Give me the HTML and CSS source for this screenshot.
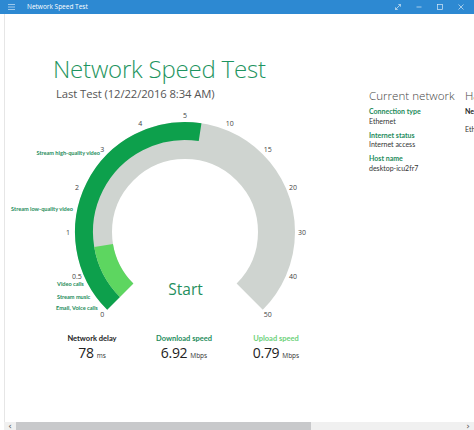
FILE: index.html
```html
<!DOCTYPE html>
<html>
<head>
<meta charset="utf-8">
<link rel="stylesheet" href="styles.css">
</head>
<body>
<div class="titlebar">
  <svg class="hamb" width="7" height="6" viewBox="0 0 7 6"><path d="M0 0.5H7M0 3H7M0 5.5H7" stroke="#b9d9f2" stroke-width="0.8"/></svg>
  <span class="apptitle">Network Speed Test</span>
  <div class="controls">
    <svg class="ctl" width="6" height="6" viewBox="0 0 6 6"><path d="M0.5 5.5L5.5 0.5M3.3 0.5H5.5V2.7M0.5 3.3V5.5H2.7" stroke="#d7e9f7" stroke-width="0.7" fill="none"/></svg>
    <svg class="ctl" width="6" height="6" viewBox="0 0 6 6"><path d="M0.5 3H5.5" stroke="#d7e9f7" stroke-width="0.7"/></svg>
    <svg class="ctl" width="6" height="6" viewBox="0 0 6 6"><rect x="0.5" y="0.5" width="5" height="5" stroke="#d7e9f7" stroke-width="0.7" fill="none"/></svg>
    <svg class="ctl" width="6" height="6" viewBox="0 0 6 6"><path d="M0.5 0.5L5.5 5.5M5.5 0.5L0.5 5.5" stroke="#d7e9f7" stroke-width="0.7"/></svg>
  </div>
</div>
<div class="main">
  <section class="left">
    <header class="head">
      <h1 class="title">Network Speed Test</h1>
      <p class="last">Last Test (12/22/2016 8:34 AM)</p>
    </header>
    <svg class="gauge" width="360" height="218" viewBox="5 0 360 218">
      <path d="M120.30 191.70 A91.5 91.5 0 1 1 249.70 191.70" fill="none" stroke="#cfd4d0" stroke-width="37"/>
      <path d="M113.58 198.42 A101 101 0 0 1 200.10 27.13" fill="none" stroke="#0da04c" stroke-width="18"/>
      <path d="M126.66 185.34 A82.5 82.5 0 0 1 103.61 140.47" fill="none" stroke="#5dd660" stroke-width="19"/>
      <g class="ticks">
        <text x="102.3" y="209.7">0</text>
        <text x="76.9" y="171.3">0.5</text>
        <text x="68" y="127">1</text>
        <text x="76.9" y="82.2">2</text>
        <text x="102.3" y="44.3">3</text>
        <text x="140.2" y="18.9">4</text>
        <text x="185" y="10">5</text>
        <text x="229.8" y="18.9">10</text>
        <text x="267.7" y="44.3">15</text>
        <text x="293.1" y="82.2">20</text>
        <text x="302" y="127">30</text>
        <text x="293.1" y="171.8">40</text>
        <text x="267.7" y="209.7">50</text>
      </g>
      <g class="cats">
        <text class="end" x="100" y="47">Stream high-quality video</text>
        <text class="end" x="73" y="103">Stream low-quality video</text>
        <text x="57" y="178.5">Video calls</text>
        <text x="57" y="191">Stream music</text>
        <text x="56" y="202">Email, Voice calls</text>
      </g>
      <text class="start" x="185.5" y="190">Start</text>
    </svg>
    <div class="stats">
      <div class="stat">
        <div class="slabel">Network delay</div>
        <div class="sval">78<span class="unit">ms</span></div>
      </div>
      <div class="stat">
        <div class="slabel dl">Download speed</div>
        <div class="sval">6.92<span class="unit">Mbps</span></div>
      </div>
      <div class="stat">
        <div class="slabel ul">Upload speed</div>
        <div class="sval">0.79<span class="unit">Mbps</span></div>
      </div>
    </div>
  </section>
  <section class="panel">
    <h2 class="ptitle">Current network</h2>
    <div class="item"><div class="ilabel">Connection type</div><div class="ival">Ethernet</div></div>
    <div class="item"><div class="ilabel">Internet status</div><div class="ival">Internet access</div></div>
    <div class="item"><div class="ilabel">Host name</div><div class="ival">desktop-icu2fr7</div></div>
  </section>
  <section class="panel panel2">
    <h2 class="ptitle">Hardware</h2>
    <div class="item"><div class="ilabel dark">Network adapter</div><div class="ival v2">Ethernet</div></div>
  </section>
</div>
<div class="scrollbar">
  <span class="arrow">&#8249;</span>
  <div class="track"><div class="thumb"></div></div>
  <span class="arrow">&#8250;</span>
</div>
</body>
</html>
```

FILE: styles.css
```css
html, body {
  margin: 0;
  padding: 0;
}
body {
  width: 474px;
  height: 430px;
  overflow: hidden;
  display: flex;
  flex-direction: column;
  background: #ffffff;
  font-family: "Open Sans", "Noto Sans", sans-serif;
  color: #333;
}
.titlebar {
  height: 14px;
  flex: none;
  background: #2d89d2;
  display: flex;
  align-items: center;
}
.hamb {
  margin-left: 8px;
}
.apptitle {
  margin-left: 12px;
  color: #ffffff;
  font-size: 6.5px;
  line-height: 14px;
}
.controls {
  margin-left: auto;
  display: flex;
  align-items: center;
  gap: 15px;
  margin-right: 10px;
}
.main {
  flex: 1;
  display: flex;
  margin-left: 4px;
  border-left: 1px solid #e6e6e6;
  overflow: hidden;
  min-height: 0;
}
.left {
  width: 364px;
  flex: none;
}
.head {
  height: 91px;
  padding-left: 48px;
  box-sizing: border-box;
  padding-top: 41px;
}
.title {
  margin: 0;
  font-size: 24px;
  line-height: 27px;
  font-weight: 300;
  color: #1e9460;
  letter-spacing: -0.2px;
}
.last {
  margin: 4px 0 0 0;
  padding-left: 3px;
  font-size: 11.3px;
  line-height: 15px;
  color: #555;
  letter-spacing: -0.1px;
}
.gauge {
  display: block;
}
.ticks text {
  font-family: "Open Sans", sans-serif;
  font-size: 7px;
  fill: #444;
  text-anchor: middle;
  dominant-baseline: central;
}
.cats text {
  font-family: "Lato", "Open Sans", sans-serif;
  font-size: 5.6px;
  font-weight: 700;
  fill: #1e8c5c;
  dominant-baseline: central;
}
.cats text.end {
  text-anchor: end;
}
.start {
  font-family: "Open Sans", sans-serif;
  font-size: 15.5px;
  fill: #1f8f5e;
  text-anchor: middle;
}
.stats {
  display: flex;
  padding-left: 41px;
  padding-top: 11px;
}
.stat {
  width: 92px;
  text-align: center;
}
.slabel {
  font-family: "Lato", "Open Sans", sans-serif;
  font-size: 7.5px;
  font-weight: 700;
  line-height: 10px;
  color: #222;
}
.slabel.dl {
  color: #1e8c5c;
}
.slabel.ul {
  color: #6cd17a;
}
.sval {
  font-size: 14px;
  line-height: 17px;
  color: #222;
  letter-spacing: -0.3px;
}
.unit {
  font-size: 6.5px;
  margin-left: 3px;
  color: #333;
  letter-spacing: 0;
}
.panel {
  flex: none;
  width: 96px;
  padding-top: 73px;
}
.panel2 {
  width: 60px;
}
.ptitle {
  margin: 0 0 3px 0;
  font-size: 11.6px;
  line-height: 17px;
  font-weight: 300;
  color: #444;
  white-space: nowrap;
}
.item {
  margin-bottom: 4.5px;
}
.ilabel {
  font-family: "Lato", "Open Sans", sans-serif;
  font-size: 7px;
  font-weight: 700;
  line-height: 9.5px;
  color: #1e8c5c;
  white-space: nowrap;
}
.ilabel.dark {
  color: #222;
}
.ival {
  font-family: "Lato", "Open Sans", sans-serif;
  font-size: 7px;
  line-height: 9.5px;
  color: #333;
  white-space: nowrap;
}
.ival.v2 {
  margin-top: 8px;
}
.scrollbar {
  height: 8px;
  flex: none;
  display: flex;
  align-items: center;
  background: #f0f0f0;
  margin-left: 4px;
}
.arrow {
  font-size: 9px;
  line-height: 8px;
  width: 12px;
  text-align: center;
  color: #555;
  font-family: "DejaVu Sans", sans-serif;
}
.track {
  flex: 1;
  height: 8px;
}
.thumb {
  width: 295px;
  height: 8px;
  background: #c8c9cb;
}
```
